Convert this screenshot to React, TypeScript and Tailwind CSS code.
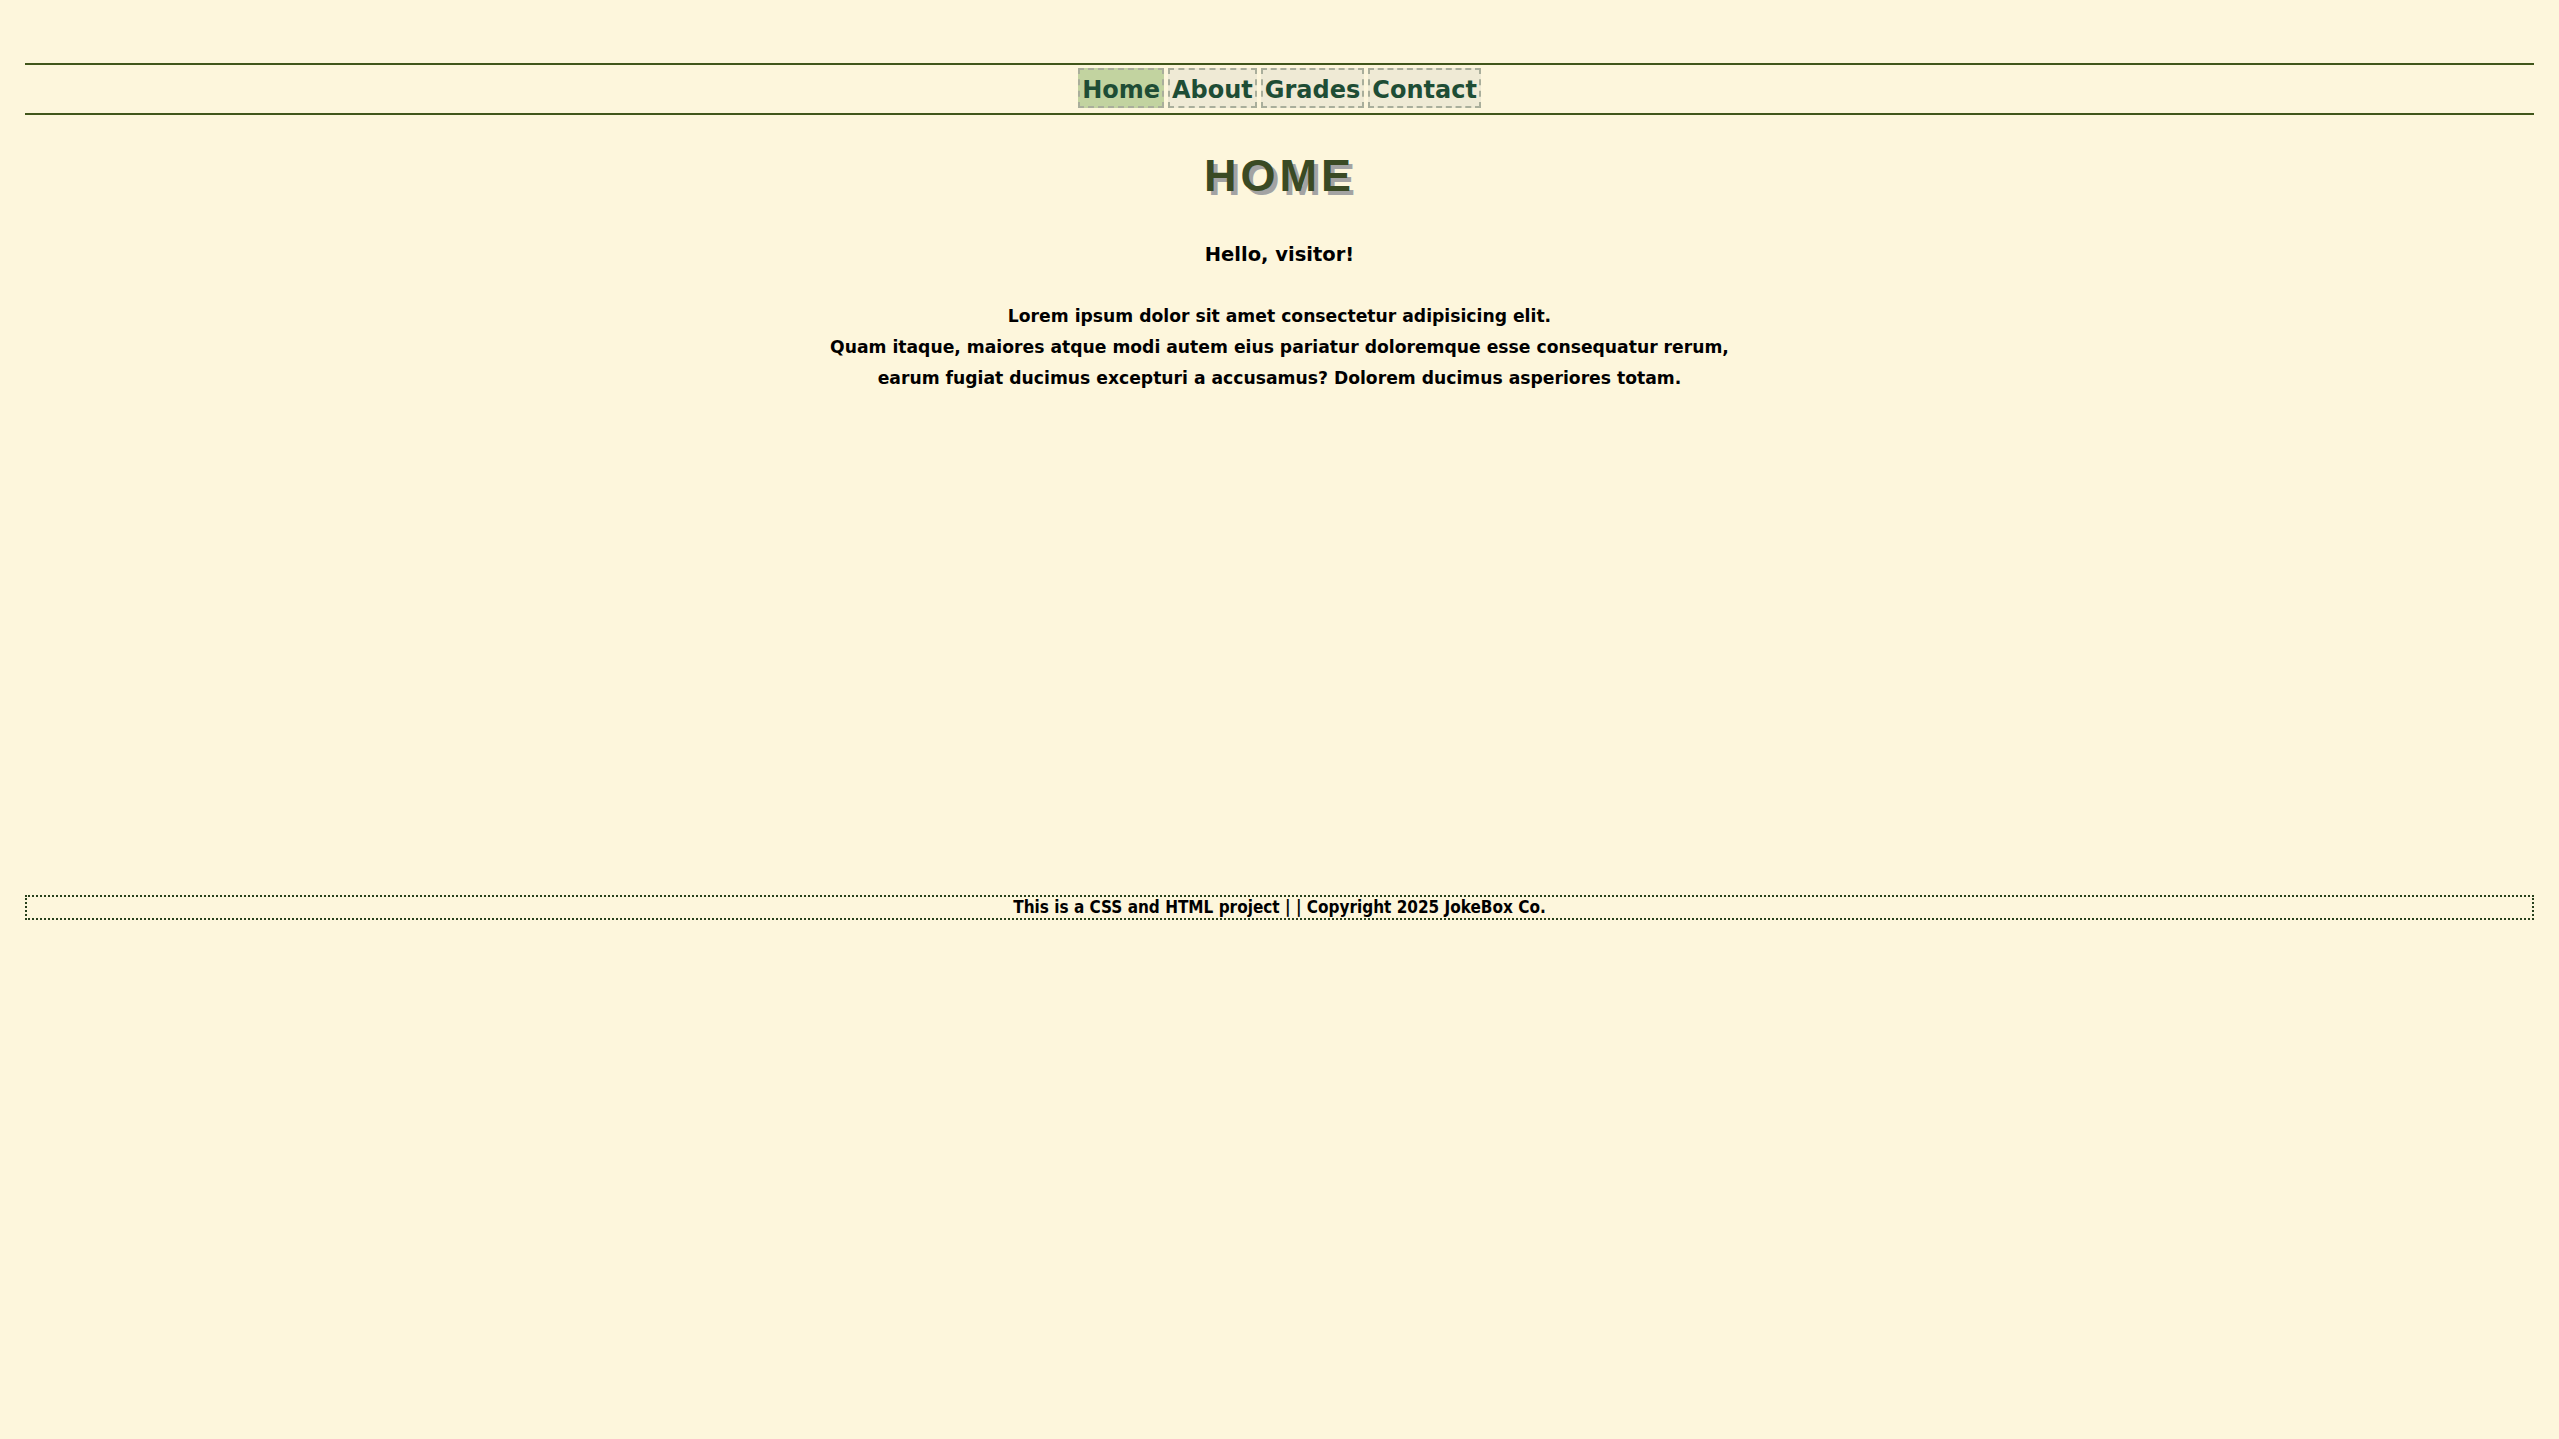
const links = [
  { label: "Home", active: true },
  { label: "About", active: false },
  { label: "Grades", active: false },
  { label: "Contact", active: false },
];

export default function App() {
  return (
    <div className="min-h-screen w-full bg-[#fdf6dc] px-[25px] pt-[63px] text-black">
      {/* NAV */}
      <nav className="flex h-[52px] items-start justify-center gap-[4px] border-y-2 border-[#41561b] pt-[3px]">
        {links.map((l) => (
          <a
            key={l.label}
            href="#"
            className={`flex h-[40px] items-center border-2 border-dashed border-[#a9ae9b] px-[2px] pt-[4px] text-[24px] font-bold text-[#1e4d35] [font-family:'DejaVu_Sans',Verdana,sans-serif] ${
              l.active ? "bg-[#c2d3a0]" : "bg-[#efead5]"
            }`}
          >
            {l.label}
          </a>
        ))}
      </nav>

      {/* MAIN */}
      <main className="flex h-[780px] flex-col items-center text-center [font-family:'DejaVu_Sans',Verdana,sans-serif]">
        <h1 className="mt-[35px] text-[45px] font-bold leading-[52px] tracking-[4px] text-[#3a4a24] [font-family:'Liberation_Sans',Arial,sans-serif] [text-shadow:4px_4px_0_#a3a3a3]">
          HOME
        </h1>
        <h2 className="mt-[39px] text-[19.5px] font-bold leading-[28px]">Hello, visitor!</h2>
        <p className="mt-[32px] text-[17.2px] font-bold leading-[31px]">
          Lorem ipsum dolor sit amet consectetur adipisicing elit.
          <br />
          Quam itaque, maiores atque modi autem eius pariatur doloremque esse consequatur rerum,
          <br />
          earum fugiat ducimus excepturi a accusamus? Dolorem ducimus asperiores totam.
        </p>
      </main>

      {/* FOOTER */}
      <footer className="flex h-[25px] items-center justify-center border-2 border-dotted border-[#27401c] text-[17px] font-bold [font-family:'Liberation_Sans_Narrow','DejaVu_Sans_Condensed',sans-serif]">
        This is a CSS and HTML project | | Copyright 2025 JokeBox Co.
      </footer>
    </div>
  );
}
